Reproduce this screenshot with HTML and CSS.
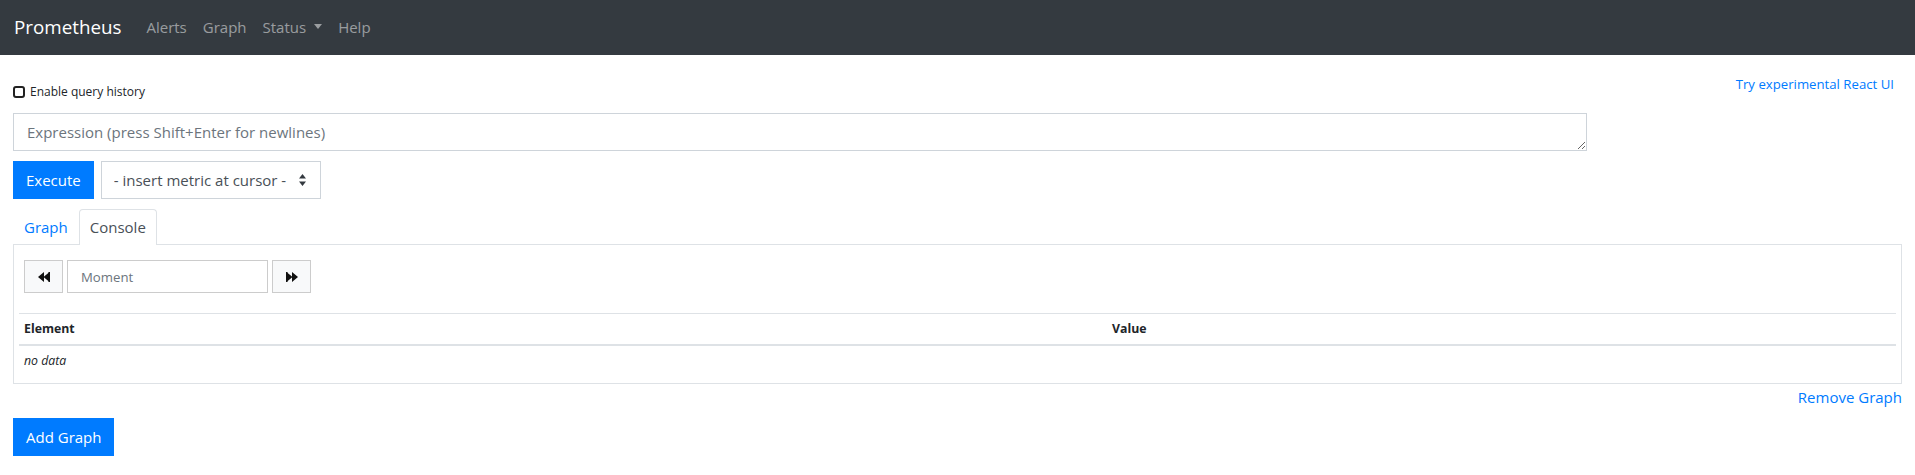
FILE: index.html
```html
<!DOCTYPE html>
<html lang="en">
<head>
<meta charset="utf-8">
<title>Prometheus Time Series Collection and Processing Server</title>
<link rel="stylesheet" href="styles.css">
</head>
<body>
<nav class="navbar">
  <a class="brand" href="#">Prometheus</a>
  <ul class="nav-links">
    <li><a href="#">Alerts</a></li>
    <li><a href="#">Graph</a></li>
    <li><a href="#" class="dropdown">Status<span class="caret"></span></a></li>
    <li><a href="#">Help</a></li>
  </ul>
</nav>
<main class="main">
  <div class="topbar">
    <label class="history"><input type="checkbox" class="check"><span>Enable query history</span></label>
    <a class="react-link" href="#">Try experimental React UI</a>
  </div>
  <div class="expr-wrap">
    <textarea class="expr" placeholder="Expression (press Shift+Enter for newlines)"></textarea>
  </div>
  <div class="actions">
    <button class="btn btn-primary">Execute</button>
    <div class="select-wrap">
      <select class="metric-select"><option>- insert metric at cursor -</option></select>
      <svg class="select-arrows" width="7" height="12" viewBox="0 0 7 12"><path d="M3.5 0 L7 4.5 L0 4.5 Z M3.5 12 L7 7.5 L0 7.5 Z" fill="#343a40"/></svg>
    </div>
  </div>
  <ul class="tabs">
    <li><a href="#" class="tab">Graph</a></li>
    <li><a href="#" class="tab active">Console</a></li>
  </ul>
  <div class="panel">
    <div class="moment-row">
      <button class="btn-light" aria-label="Back">
        <svg width="12" height="10" viewBox="0 0 12 10"><path d="M0 5 L6 0 L6 10 Z M5.5 5 L11.5 0 L11.5 10 Z" fill="#111"/><rect x="10.5" y="0" width="1.5" height="10" fill="#111"/></svg>
      </button>
      <input class="moment" type="text" placeholder="Moment">
      <button class="btn-light" aria-label="Forward">
        <svg width="12" height="10" viewBox="0 0 12 10"><path d="M12 5 L6 0 L6 10 Z M6.5 5 L0.5 0 L0.5 10 Z" fill="#111"/><rect x="0" y="0" width="1.5" height="10" fill="#111"/></svg>
      </button>
    </div>
    <table class="data">
      <thead>
        <tr><th class="col-el">Element</th><th>Value</th></tr>
      </thead>
      <tbody>
        <tr><td colspan="2"><em>no data</em></td></tr>
      </tbody>
    </table>
  </div>
  <div class="remove-row"><a href="#" class="remove">Remove Graph</a></div>
  <button class="btn btn-primary add">Add Graph</button>
</main>
</body>
</html>
```
FILE: styles.css
```css
* { box-sizing: border-box; }
html, body { margin: 0; padding: 0; }
body {
  font-family: "Open Sans", "Noto Sans", sans-serif;
  font-size: 15px;
  line-height: 24px;
  color: #212529;
  background: #fff;
}
a { text-decoration: none; color: #007bff; }

.navbar {
  height: 55px;
  background: #343a40;
  display: flex;
  align-items: center;
  padding: 0 14px 2px;
}
.brand { color: #fff; font-size: 18.8px; line-height: 30px; margin-right: 17px; }
.nav-links { list-style: none; margin: 0; padding: 0; display: flex; }
.nav-links a {
  display: flex; align-items: center;
  padding: 0 8px; color: rgba(255,255,255,.5);
}
.caret {
  display: inline-block; margin-left: 8px;
  border-top: 5px solid rgba(255,255,255,.5);
  border-left: 4.5px solid transparent;
  border-right: 4.5px solid transparent;
}

.main { padding: 0 13px; }
.topbar { display: flex; justify-content: space-between; align-items: flex-start; padding-top: 19px; }
.history { display: flex; align-items: center; margin-top: 8px; font-size: 12px; line-height: 19px; }
.check {
  -webkit-appearance: none; appearance: none;
  width: 12px; height: 12px; margin: 0 5px 0 0;
  border: 2px solid #222; border-radius: 3px; background: #fff;
}
.react-link { font-size: 13.2px; line-height: 21px; margin-right: 8px; }

.expr-wrap { margin-top: 12px; width: calc(100% * 10 / 12); }
.expr {
  display: block; width: 100%; height: 38px; margin: 0;
  padding: 6px 13px; border: 1px solid #ced4da; border-radius: 0;
  font: inherit; color: #495057; resize: vertical;
}
.expr::placeholder { color: #6c757d; opacity: 1; }

.actions { display: flex; margin-top: 10px; gap: 7px; }
.btn {
  height: 38px; padding: 0 12px; border: 1px solid #007bff; border-radius: 0;
  font: inherit; cursor: pointer;
}
.btn-primary { background: #007bff; color: #fff; }
.select-wrap { position: relative; width: 220px; height: 38px; }
.metric-select {
  -webkit-appearance: none; appearance: none;
  width: 100%; height: 100%; margin: 0; padding: 0 24px 0 12px;
  border: 1px solid #ced4da; border-radius: 0; background: #fff;
  font: inherit; color: #495057;
}
.select-arrows { position: absolute; right: 15px; top: 13px; pointer-events: none; }

.tabs { list-style: none; margin: 10px 0 0; padding: 0; display: flex; position: relative; z-index: 1; }
.tab {
  display: block; height: 36px; padding: 5px 10px;
  border: 1px solid transparent; border-bottom: 0;
  border-radius: 4px 4px 0 0; color: #007bff;
}
.tab.active { color: #495057; background: #fff; border-color: #dee2e6; }

.panel {
  border: 1px solid #dee2e6;
  margin-top: -1px;
  padding: 15px 10px 7px;
}
.moment-row { display: flex; gap: 4px; height: 33px; }
.btn-light {
  width: 39px; height: 33px; padding: 0; margin: 0;
  background: #f8f9fa; border: 1px solid #ccc; border-radius: 0;
  display: flex; align-items: center; justify-content: center;
}
.moment {
  width: 201px; height: 33px; margin: 0; padding: 5px 13px;
  border: 1px solid #ccc; border-radius: 0;
  font: inherit; font-size: 13.2px; color: #495057;
}
.moment::placeholder { color: #6c757d; opacity: 1; }

.data {
  width: calc(100% + 10px); margin: 20px -5px 0;
  border-collapse: collapse; font-size: 12.3px; line-height: 20px;
}
.data th {
  text-align: left; font-weight: 700; padding: 5px;
  border-top: 1px solid #dee2e6; border-bottom: 2px solid #dee2e6;
}
.data td { padding: 5px; }
.col-el { width: 1088px; }

.remove-row { text-align: right; margin-top: 1px; line-height: 24px; }
.add { display: block; margin-top: 9px; }
```
